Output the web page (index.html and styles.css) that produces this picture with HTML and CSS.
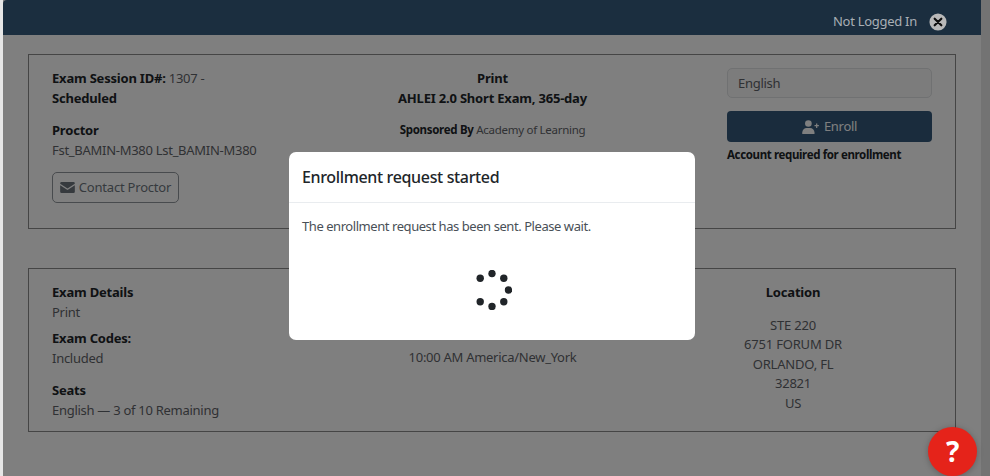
FILE: index.html
```html
<!DOCTYPE html>
<html lang="en">
<head>
  <meta charset="UTF-8" />
  <title>Exam Session</title>
  <link rel="stylesheet" href="styles.css">
</head>
<body>
  <div class="page">
    <header class="topbar">
      <span class="login-label">Not Logged In</span>
      <span class="login-icon">
        <svg viewBox="0 0 20 20" width="18" height="18"><circle cx="10" cy="10" r="9.500" fill="#b8b8b8"/><path d="M6.300 6.300l7.400 7.400M13.700 6.300l-7.400 7.400" stroke="#0d0d0d" stroke-width="2.400" stroke-linecap="round"/></svg>
      </span>
    </header>

    <section class="panel panel-top">
      <div class="col col-left">
        <p class="line"><b>Exam Session ID#:</b> 1307 -<br><b>Scheduled</b></p>
        <p class="line proctor"><b>Proctor</b><br>Fst_BAMIN-M380 Lst_BAMIN-M380</p>
        <button class="contact-btn">
          <svg viewBox="0 0 16 12" width="15" height="11"><path d="M1.500 0h13A1.500 1.500 0 0 1 16 1.500v.4L8 7 0 1.900v-.4A1.500 1.500 0 0 1 1.500 0z" fill="currentColor"/><path d="M0 3.600l8 5 8-5v6.900a1.500 1.500 0 0 1-1.500 1.500h-13A1.500 1.500 0 0 1 0 10.500z" fill="currentColor"/></svg>
          Contact Proctor
        </button>
      </div>
      <div class="col col-mid">
        <p class="line"><b>Print</b><br><b>AHLEI 2.0 Short Exam, 365-day</b></p>
        <p class="sponsor"><b>Sponsored By</b> Academy of Learning</p>
      </div>
      <div class="col col-right">
        <div class="lang-select">English</div>
        <button class="enroll-btn">
          <svg viewBox="0 0 20 16" width="18" height="14"><circle cx="7" cy="4" r="3.800" fill="currentColor"/><path d="M0 16v-1.800C0 11 2.500 9 5 9h4c2.500 0 5 2 5 5.200V16z" fill="currentColor"/><path d="M16.500 4v5M14 6.500h5" stroke="currentColor" stroke-width="1.400"/></svg>
          Enroll
        </button>
        <p class="account-note">Account required for enrollment</p>
      </div>
    </section>

    <section class="panel panel-bottom">
      <div class="col col-left">
        <p class="line"><b>Exam Details</b><br>Print</p>
        <p class="line codes"><b>Exam Codes:</b><br>Included</p>
        <p class="line seats"><b>Seats</b><br>English — 3 of 10 Remaining</p>
      </div>
      <div class="col col-mid">
        <p class="line time">10:00 AM America/New_York</p>
      </div>
      <div class="col col-location">
        <p class="line location-title"><b>Location</b></p>
        <p class="line address">STE 220<br>6751 FORUM DR<br>ORLANDO, FL<br>32821<br>US</p>
      </div>
    </section>
  </div>

  <div class="backdrop"></div>

  <div class="modal">
    <div class="modal-header">Enrollment request started</div>
    <div class="modal-body">
      <p>The enrollment request has been sent. Please wait.</p>
      <svg class="spinner" viewBox="0 0 40 40" width="40" height="40" fill="#212529">
        <circle cx="20" cy="3.500" r="3.700"/>
        <circle cx="31.800" cy="8.200" r="3.700"/>
        <circle cx="36.500" cy="20" r="3.700"/>
        <circle cx="31.800" cy="31.800" r="3.700"/>
        <circle cx="20" cy="36.500" r="3.700"/>
        <circle cx="8.200" cy="31.800" r="3.700"/>
        <circle cx="8.200" cy="8.200" r="3.700"/>
      </svg>
    </div>
  </div>

  <div class="help-btn">?</div>
</body>
</html>
```
FILE: styles.css
```css
html, body {
  margin: 0;
  height: 100%;
  overflow: hidden;
}

body {
  font-family: "Noto Sans", sans-serif;
  font-size: 13px;
  letter-spacing: -0.28px;
  line-height: 19.5px;
  color: #5f6368;
  background: #e6e6e6;
}

b {
  color: #212529;
  letter-spacing: -0.2px;
}

.page {
  margin-left: 3px;
  width: 978px;
  height: 476px;
  background: #fff;
}

.topbar {
  position: relative;
  z-index: 2;
  height: 35px;
  background: #1b2e3f;
  display: flex;
  justify-content: flex-end;
  align-items: center;
  gap: 12px;
  padding: 8px 34px 0 0;
  box-sizing: border-box;
  color: #a9afb5;
  border-top-left-radius: 4px;
}

.login-icon {
  display: flex;
}

.panel {
  margin: 19px 25px 0;
  border: 1px solid #8a8a8a;
  display: flex;
  box-sizing: border-box;
}

.panel-top {
  height: 175px;
}

.panel-bottom {
  margin-top: 39px;
  height: 164px;
}

.col {
  box-sizing: border-box;
  padding-top: 14px;
}

.col-left {
  width: 309px;
  padding-left: 23px;
}

.col-mid {
  width: 309px;
  text-align: center;
}

.col-right {
  width: 205px;
  margin-left: 80px;
  padding-top: 13px;
}

.col-location {
  width: 292px;
  text-align: center;
}

.line {
  margin: 0;
}

.address {
  letter-spacing: -0.2px;
}

.proctor {
  margin-top: 13px;
}

.contact-btn {
  margin-top: 12px;
  height: 31px;
  width: 127px;
  display: flex;
  align-items: center;
  justify-content: center;
  gap: 4px;
  padding: 0;
  background: transparent;
  border: 1px solid #90969c;
  border-radius: 5px;
  color: #6c757d;
  font: inherit;
  letter-spacing: -0.2px;
}

.sponsor {
  margin: 12px 0 0;
  font-size: 11.500px;
}

.sponsor b {
  letter-spacing: -0.3px;
}

.lang-select {
  height: 30px;
  box-sizing: border-box;
  padding: 5px 10px;
  border: 1px solid #e0e2e4;
  border-radius: 5px;
  background: #f8f8f8;
  color: #5f6368;
}

.enroll-btn {
  margin-top: 13px;
  width: 100%;
  height: 31px;
  display: flex;
  align-items: center;
  justify-content: center;
  gap: 4px;
  padding: 1px 0 0;
  border: 0;
  border-radius: 4px;
  background: #34597a;
  color: #fff;
  font: inherit;
  letter-spacing: -0.3px;
}

.account-note {
  margin: 3px 0 0;
  font-size: 11.500px;
  font-weight: 700;
  letter-spacing: -0.37px;
  color: #212529;
}

.codes {
  margin-top: 7px;
}

.seats {
  margin-top: 13px;
}

.time {
  margin-top: 52px;
  padding-top: 13px;
}

.location-title {
  margin-bottom: 13px;
}

.backdrop {
  position: absolute;
  top: 0;
  bottom: 0;
  left: 3px;
  right: 0;
  background: rgba(0, 0, 0, 0.5);
}

.modal {
  position: absolute;
  z-index: 3;
  left: 289px;
  top: 152px;
  width: 406px;
  height: 188px;
  background: #fff;
  border-radius: 7px;
  overflow: hidden;
  color: #495057;
}

.modal-header {
  height: 51px;
  box-sizing: border-box;
  padding: 13px 13px 0;
  border-bottom: 1px solid #e9ecef;
  font-size: 16px;
  letter-spacing: -0.35px;
  line-height: 25px;
  font-weight: 500;
  color: #212529;
}

.modal-body {
  padding: 14px 13px;
}

.modal-body p {
  margin: 0;
  letter-spacing: -0.44px;
}

.spinner {
  display: block;
  margin: 33px auto 0;
}

.help-btn {
  position: absolute;
  z-index: 4;
  left: 928px;
  top: 427px;
  width: 49px;
  height: 49px;
  border-radius: 50%;
  background: #e5231a;
  color: #fff;
  font-size: 28px;
  line-height: 49px;
  font-weight: 700;
  text-align: center;
  box-shadow: 0 1px 6px rgba(0, 0, 0, 0.25);
}
```
